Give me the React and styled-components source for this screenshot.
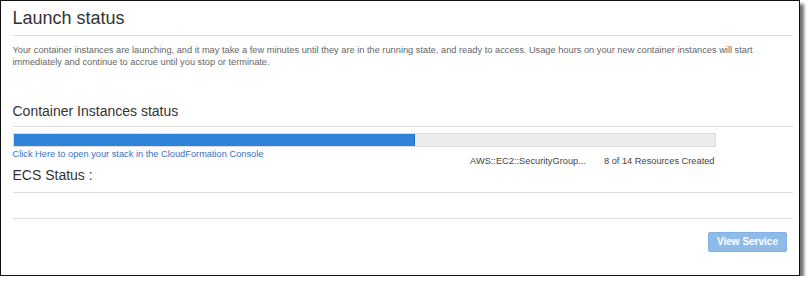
import React from "react";
import styled, { createGlobalStyle } from "styled-components";

const GlobalStyle = createGlobalStyle`
  body {
    margin: 0;
    background: #ffffff;
    font-family: "Liberation Sans", Arial, sans-serif;
  }
`;

const Card = styled.div`
  box-sizing: border-box;
  width: 800px;
  height: 276px;
  border: 1.5px solid #111;
  background: #fff;
  box-shadow: 4px 4px 3px rgba(0, 0, 0, 0.55);
  padding: 6px 6px 0 11.5px;
  display: flex;
  flex-direction: column;
`;

const Title = styled.h1`
  margin: 0;
  font-size: 18px;
  line-height: 22px;
  font-weight: normal;
  color: #333;
`;

const Hr = styled.div`
  border-top: 1px solid #dedede;
  margin-top: ${({ $top }) => $top}px;
`;

const Intro = styled.p`
  margin: 8px 0 0;
  font-size: 9.25px;
  line-height: 12px;
  color: #666;
`;

const Heading = styled.h2`
  margin: ${({ $top }) => $top}px 0 0;
  font-size: 14px;
  line-height: 17px;
  font-weight: normal;
  color: #333;
`;

const Track = styled.div`
  box-sizing: border-box;
  width: 703px;
  height: 14px;
  margin-top: 6px;
  background: #ececec;
  border: 1px solid #dcdcdc;
  display: flex;
`;

const Fill = styled.div`
  height: 100%;
  background: #2f83d9;
  border-right: 1px solid #1f6fc0;
`;

const StatusRow = styled.div`
  width: 703px;
  display: flex;
  justify-content: space-between;
  align-items: flex-start;
  font-size: 9.25px;
  line-height: 12px;
  margin-top: 1px;
`;

const StackLink = styled.a`
  color: #3a6fc8;
  text-decoration: none;
  cursor: pointer;
`;

const Resources = styled.div`
  display: flex;
  gap: 18px;
  padding-top: 7px;
  padding-right: 1px;
  color: #444;
`;

const Footer = styled.div`
  display: flex;
  justify-content: flex-end;
  margin-top: 13px;
  padding-right: 6px;
`;

const Button = styled.button`
  box-sizing: border-box;
  width: 79px;
  height: 20px;
  border: 1px solid #82b0e2;
  border-radius: 2px;
  background: #8fbbe9;
  color: #fff;
  font-family: "Liberation Sans", Arial, sans-serif;
  font-size: 10px;
  font-weight: bold;
  padding: 0;
  cursor: default;
`;

export default function App() {
  const created = 8;
  const total = 14;
  return (
    <>
      <GlobalStyle />
      <Card>
        <Title>Launch status</Title>
        <Hr $top={5.5} />
        <Intro>
          Your container instances are launching, and it may take a few minutes
          until they are in the running state, and ready to access. Usage hours
          on your new container instances will start immediately and continue to
          accrue until you stop or terminate.
        </Intro>
        <Heading $top={35.5}>Container Instances status</Heading>
        <Hr $top={6.3} />
        <Track>
          <Fill style={{ width: `${(created / total) * 100}%` }} />
        </Track>
        <StatusRow>
          <StackLink>Click Here to open your stack in the CloudFormation Console</StackLink>
          <Resources>
            <span>AWS::EC2::SecurityGroup...</span>
            <span>
              {created} of {total} Resources Created
            </span>
          </Resources>
        </StatusRow>
        <Heading $top={0}>ECS Status :</Heading>
        <Hr $top={7.3} />
        <Hr $top={25} />
        <Footer>
          <Button>View Service</Button>
        </Footer>
      </Card>
    </>
  );
}
